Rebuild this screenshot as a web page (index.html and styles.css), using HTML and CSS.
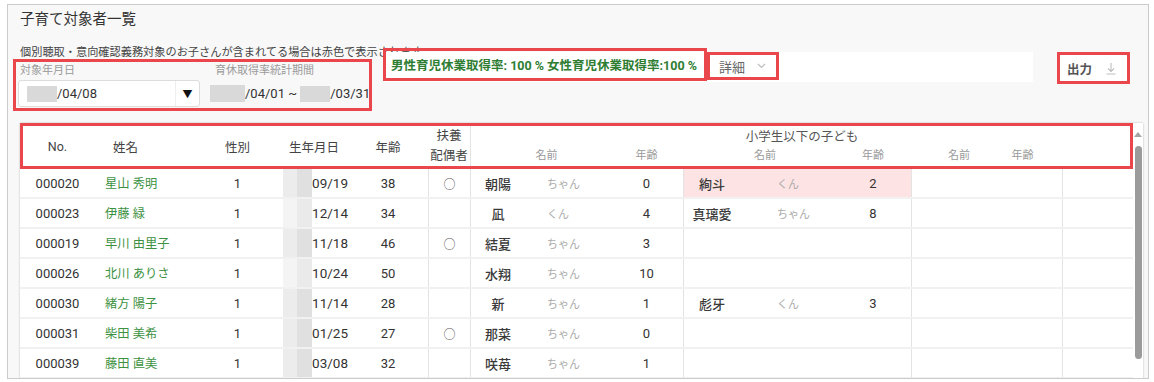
FILE: index.html
```html
<!doctype html>
<html lang="ja">
  <head>
    <meta charset="utf-8">
    <title>子育て対象者一覧</title>
    <link rel="stylesheet" href="styles.css">
  </head>
  <body>
    <div class="frame">
      <h2 class="title">子育て対象者一覧</h2>
      <p class="note">個別聴取・意向確認義務対象のお子さんが含まれてる場合は赤色で表示されます</p>

      <div class="toolbar">
        <div class="filters mark">
          <div class="field">
            <label class="field-label">対象年月日</label>
            <div class="select">
              <span class="select-value"><span class="blur"></span>/04/08</span>
              <span class="select-arrow">&#9660;</span>
            </div>
          </div>
          <div class="field period">
            <label class="field-label">育休取得率統計期間</label>
            <div class="period-value"><span class="blur wide"></span>/04/01&nbsp;~&nbsp;<span class="blur"></span>/03/31</div>
          </div>
        </div>

        <div class="summary">
          <div class="rates mark">男性育児休業取得率:&nbsp;100 %&nbsp;女性育児休業取得率:100 %</div>
          <div class="detail mark">詳細
            <svg width="9" height="6" viewBox="0 0 9 6"><path d="M1 1l3.5 3.5L8 1" fill="none" stroke="#bdbdbd" stroke-width="1.2"/></svg>
          </div>
        </div>

        <button class="export mark">出力
          <svg width="10" height="13" viewBox="0 0 10 13"><path d="M5 1v8.5M2 6.5l3 3 3-3M0.5 12h9" fill="none" stroke="#bdbdbd" stroke-width="1.1"/></svg>
        </button>
      </div>

      <div class="card">
        <div class="table">
          <div class="thead cols">
            <div class="th main">No.</div>
            <div class="th main th-name">姓名</div>
            <div class="th main">性別</div>
            <div class="th main">生年月日</div>
            <div class="th main">年齢</div>
            <div class="th main th-sp"><span>扶養</span><span>配偶者</span></div>
            <div class="th-group bl">小学生以下の子ども</div>
            <div class="th-sub name bl">名前</div>
            <div class="th-sub">年齢</div>
            <div class="th-sub name">名前</div>
            <div class="th-sub">年齢</div>
            <div class="th-sub name">名前</div>
            <div class="th-sub last">年齢</div>
            <div class="th-sub"></div>
          </div>

          <div class="tr cols">
            <div class="td">000020</div><div class="td person">星山 秀明</div><div class="td">1</div>
            <div class="td birth"><span class="blur cell"></span>09/19</div><div class="td">38</div><div class="td bl mark-o">○</div>
            <div class="td bl kid">朝陽</div><div class="td suf">ちゃん</div><div class="td">0</div>
            <div class="td bl kid hl">絢斗</div><div class="td suf second hl">くん</div><div class="td hl">2</div>
            <div class="td bl"></div><div class="td"></div><div class="td"></div><div class="td bl"></div>
          </div>
          <div class="tr cols">
            <div class="td">000023</div><div class="td person">伊藤 緑</div><div class="td">1</div>
            <div class="td birth"><span class="blur cell light"></span>12/14</div><div class="td">34</div><div class="td bl"></div>
            <div class="td bl kid">凪</div><div class="td suf">くん</div><div class="td">4</div>
            <div class="td bl kid">真璃愛</div><div class="td suf second">ちゃん</div><div class="td">8</div>
            <div class="td bl"></div><div class="td"></div><div class="td"></div><div class="td bl"></div>
          </div>
          <div class="tr cols">
            <div class="td">000019</div><div class="td person">早川 由里子</div><div class="td">1</div>
            <div class="td birth"><span class="blur cell"></span>11/18</div><div class="td">46</div><div class="td bl mark-o">○</div>
            <div class="td bl kid">結夏</div><div class="td suf">ちゃん</div><div class="td">3</div>
            <div class="td bl"></div><div class="td"></div><div class="td"></div>
            <div class="td bl"></div><div class="td"></div><div class="td"></div><div class="td bl"></div>
          </div>
          <div class="tr cols">
            <div class="td">000026</div><div class="td person">北川 ありさ</div><div class="td">1</div>
            <div class="td birth"><span class="blur cell light"></span>10/24</div><div class="td">50</div><div class="td bl"></div>
            <div class="td bl kid">水翔</div><div class="td suf">ちゃん</div><div class="td">10</div>
            <div class="td bl"></div><div class="td"></div><div class="td"></div>
            <div class="td bl"></div><div class="td"></div><div class="td"></div><div class="td bl"></div>
          </div>
          <div class="tr cols">
            <div class="td">000030</div><div class="td person">緒方 陽子</div><div class="td">1</div>
            <div class="td birth"><span class="blur cell"></span>11/14</div><div class="td">28</div><div class="td bl"></div>
            <div class="td bl kid">新</div><div class="td suf">ちゃん</div><div class="td">1</div>
            <div class="td bl kid">彪牙</div><div class="td suf second">くん</div><div class="td">3</div>
            <div class="td bl"></div><div class="td"></div><div class="td"></div><div class="td bl"></div>
          </div>
          <div class="tr cols">
            <div class="td">000031</div><div class="td person">柴田 美希</div><div class="td">1</div>
            <div class="td birth"><span class="blur cell"></span>01/25</div><div class="td">27</div><div class="td bl mark-o">○</div>
            <div class="td bl kid">那菜</div><div class="td suf">ちゃん</div><div class="td">0</div>
            <div class="td bl"></div><div class="td"></div><div class="td"></div>
            <div class="td bl"></div><div class="td"></div><div class="td"></div><div class="td bl"></div>
          </div>
          <div class="tr cols">
            <div class="td">000039</div><div class="td person">藤田 直美</div><div class="td">1</div>
            <div class="td birth"><span class="blur cell"></span>03/08</div><div class="td">32</div><div class="td bl"></div>
            <div class="td bl kid">咲苺</div><div class="td suf">ちゃん</div><div class="td">1</div>
            <div class="td bl"></div><div class="td"></div><div class="td"></div>
            <div class="td bl"></div><div class="td"></div><div class="td"></div><div class="td bl"></div>
          </div>
        </div>

        <div class="scrollbar">
          <span class="scroll-up"></span>
          <span class="thumb"></span>
        </div>
      </div>
    </div>
  </body>
</html>
```

FILE: styles.css
```css
* { box-sizing: border-box; }

body {
  margin: 0;
  background: #fff;
  font-family: Roboto, "Noto Sans CJK JP", sans-serif;
  color: #333;
}

.frame {
  width: 1142px;
  height: 375px;
  margin: 4px 0 0 7px;
  padding: 5px 5px 0 12px;
  border: 1px solid #cbcbcb;
  background: #f8f8f8;
  overflow: hidden;
}

.title {
  margin: 0;
  font-size: 14.5px;
  font-weight: 400;
  line-height: 20px;
  color: #333;
}

.note {
  margin: 15px 0 0;
  font-size: 11.2px;
  line-height: 16px;
  color: #444;
  white-space: nowrap;
}

/* red highlight frames from the screenshot */
.mark { border: 3px solid #e9474c; }

.toolbar {
  display: flex;
  align-items: flex-start;
  margin-top: -12px;
}

.filters {
  display: flex;
  width: 359px;
  height: 52px;
  margin: 10px 0 0 -7px;
  padding: 2px 0 0 2px;
}

.field-label {
  display: block;
  padding-left: 2px;
  font-size: 11px;
  line-height: 14px;
  color: #9a9a9a;
}

.select {
  display: flex;
  align-items: center;
  width: 182px;
  height: 27px;
  margin-top: 2px;
  background: #fff;
  border: 1px solid #dcdcdc;
  border-radius: 3px;
}

.select-value {
  flex: 1;
  display: flex;
  align-items: center;
  padding-left: 8px;
  font-size: 13px;
  color: #333;
}

.select-arrow {
  display: flex;
  align-items: center;
  justify-content: center;
  width: 24px;
  height: 100%;
  border-left: 1px solid #eee;
  font-size: 10px;
  color: #111;
}

.blur {
  display: inline-block;
  width: 30px;
  height: 16px;
  background: #d9d9d9;
}
.blur.wide { width: 35px; height: 17px; }

.period { margin-left: 10px; }
.period .field-label { padding-left: 5px; }

.period-value {
  display: flex;
  align-items: center;
  height: 27px;
  margin-top: 2px;
  font-size: 13px;
  color: #333;
  white-space: nowrap;
}

.summary {
  position: relative;
  display: flex;
  align-items: flex-start;
  width: 650px;
  height: 30px;
  margin: 3px 0 0 11px;
  background: #fff;
}

.rates {
  display: flex;
  align-items: center;
  width: 324px;
  height: 33px;
  margin-top: -4px;
  padding: 0 2px 0 5px;
  font-size: 12.5px;
  font-weight: 700;
  color: #2e7d32;
  white-space: nowrap;
  overflow: hidden;
}

.detail {
  display: flex;
  align-items: center;
  gap: 12px;
  width: 72px;
  height: 28px;
  padding-left: 9px;
  font-size: 13px;
  color: #666;
}

.export {
  display: flex;
  align-items: center;
  gap: 14px;
  width: 73px;
  height: 32px;
  margin: 3px 13px 0 auto;
  padding: 0 0 0 7px;
  background: #fff;
  font-family: inherit;
  font-size: 12.5px;
  font-weight: 700;
  color: #555;
}

/* table */
.card {
  display: flex;
  margin-top: 12px;
  background: #fff;
  box-shadow: 0 0 2px rgba(0, 0, 0, .25);
}

.table { width: 1113px; flex: none; }

.cols {
  display: grid;
  grid-template-columns: 75px 100px 85px 68px 80px 42px 55px 85px 73px 57px 95px 76px 39px 45px 67px 71px;
}

.bl { border-left: 1px solid #e3e3e3; }

.thead {
  grid-template-rows: 24px 22px;
  outline: 3px solid #e9474c;
  outline-offset: -3px;
}

.th {
  display: flex;
  align-items: center;
  justify-content: center;
  font-size: 12.5px;
  color: #444;
}
.th.main { grid-row: 1 / 3; }
.th-name { justify-content: flex-start; padding-left: 18px; }
.th-sp { flex-direction: column; line-height: 20px; }

.th-group {
  grid-column: 7 / -1;
  grid-row: 1;
  padding-top: 5px;
  font-size: 12.5px;
  line-height: 18px;
  text-align: center;
  color: #555;
}

.th-sub {
  grid-row: 2;
  font-size: 11px;
  line-height: 18px;
  text-align: center;
  color: #9a9a9a;
}
.th-sub.name { grid-column: span 2; padding-left: 12px; }
.th-sub.last { padding-right: 12px; }

.tr {
  height: 30px;
  border-bottom: 2px solid #f1f1f1;
}

.td {
  display: flex;
  align-items: center;
  justify-content: center;
  height: 100%;
  font-size: 13px;
  color: #333;
  white-space: nowrap;
}

.td.person {
  justify-content: flex-start;
  padding-left: 10px;
  font-size: 12.3px;
  color: #3d9142;
}

.td.birth {
  justify-content: flex-start;
  padding-left: 3px;
  font-size: 13.5px;
}

.blur.cell {
  height: 28px;
  background: linear-gradient(90deg, #ececec 0 50%, #e0e0e0 50% 100%);
}
.blur.cell.light { background: linear-gradient(90deg, #f4f4f4 0 50%, #eaeaea 50% 100%); }

.mark-o { font-size: 12px; color: #555; }

.td.kid { font-weight: 500; color: #3a3a3a; }

.td.suf {
  justify-content: flex-start;
  padding-left: 22px;
  font-size: 11px;
  color: #aaa;
}
.td.suf.second { padding-left: 37px; }

.hl { background: #fde3e3; }

.scrollbar {
  flex: 1;
  display: flex;
  flex-direction: column;
  align-items: center;
  padding-top: 9px;
}

.scroll-up {
  width: 0;
  height: 0;
  border-left: 4px solid transparent;
  border-right: 4px solid transparent;
  border-bottom: 5px solid #a5a5a5;
}

.thumb {
  width: 7px;
  height: 213px;
  margin-top: 9px;
  border-radius: 4px;
  background: #9b9b9b;
}
```
